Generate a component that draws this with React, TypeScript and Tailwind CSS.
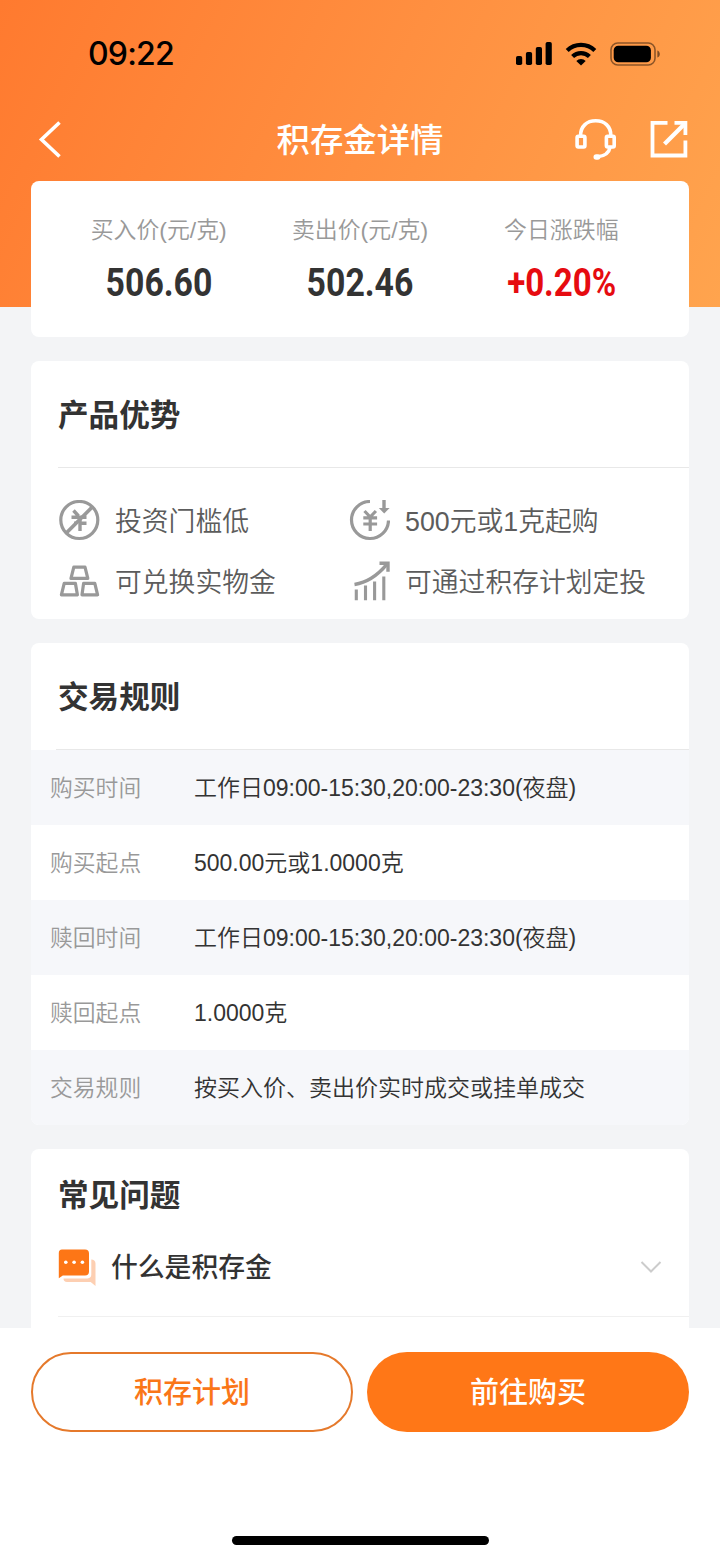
import React from 'react';

interface Price {
    label: string;
    value: string;
    tone: string;
}

interface Rule {
    label: string;
    value: string;
}

const prices: Price[] = [
    { label: '买入价(元/克)', value: '506.60', tone: 'text-[#333333] scale-x-[0.89]' },
    { label: '卖出价(元/克)', value: '502.46', tone: 'text-[#333333] scale-x-[0.89]' },
    { label: '今日涨跌幅', value: '+0.20%', tone: 'text-[#e60b10] scale-x-[0.87]' },
];

const rules: Rule[] = [
    { label: '购买时间', value: '工作日09:00-15:30,20:00-23:30(夜盘)' },
    { label: '购买起点', value: '500.00元或1.0000克' },
    { label: '赎回时间', value: '工作日09:00-15:30,20:00-23:30(夜盘)' },
    { label: '赎回起点', value: '1.0000克' },
    { label: '交易规则', value: '按买入价、卖出价实时成交或挂单成交' },
];

const SignalIcon = () => (
    <svg width="36" height="23" viewBox="0 0 36 23" fill="#000">
        <rect x="0" y="14" width="6.2" height="9" rx="1.8" />
        <rect x="9.9" y="10" width="6.2" height="13" rx="1.8" />
        <rect x="19.8" y="5" width="6.2" height="18" rx="1.8" />
        <rect x="29.6" y="0" width="6.2" height="23" rx="1.8" />
    </svg>
);

const WifiIcon = () => (
    <svg width="32" height="24" viewBox="0 0 32 24" fill="none" stroke="#000" strokeWidth="4.2">
        <path d="M2.2 8.6a19.6 19.6 0 0 1 27.6 0" />
        <path d="M7.6 14.6a12 12 0 0 1 16.8 0" />
        <path d="M16 23.6l-4.7-4.7a6.6 6.6 0 0 1 9.4 0z" fill="#000" stroke="none" />
    </svg>
);

const BatteryIcon = () => (
    <svg width="51" height="24" viewBox="0 0 51 24">
        <rect x="1" y="1" width="44" height="22" rx="6.8" fill="none" stroke="#000" strokeOpacity=".45" strokeWidth="1.6" />
        <rect x="3.7" y="3.7" width="37.2" height="16.6" rx="4.6" fill="#000" />
        <path d="M47.4 8.4c3.2 1.2 3.2 6 0 7.2z" fill="#000" fillOpacity=".5" />
    </svg>
);

const HeadsetIcon = () => (
    <svg width="42" height="42" viewBox="0 0 42 42" fill="none" stroke="#fff" strokeWidth="3.6" strokeLinecap="round">
        <path d="M5.6 17.5C5.6 8 12 2.8 20.7 2.8S35.8 8 35.8 17.5" />
        <rect x="2.1" y="18.2" width="7.8" height="10.8" rx="1.2" />
        <rect x="31.4" y="18.2" width="7.8" height="10.8" rx="1.2" />
        <path d="M35 29.500c-1 5.500-5 8.500-12.500 9.300" />
        <path d="M21.200 39h1.500" strokeWidth="5.400" />
    </svg>
);

const ShareIcon = () => (
    <svg width="38" height="38" viewBox="0 0 38 38" fill="none" stroke="#fff" strokeWidth="3.8">
        <path d="M17.5 2.9H2.5v32.600H35.400V20.500" />
        <path d="M14.5 24L34 4.500" strokeWidth="4.200" />
        <path d="M24.500 2.900h10.900v12" />
    </svg>
);

const NoThresholdIcon = () => (
    <svg width="42" height="42" viewBox="0 0 42 42" fill="none" stroke="#999999" strokeWidth="3.2">
        <circle cx="21.300" cy="20" r="18.500" />
        <path d="M8.300 33L34.300 7" strokeWidth="3.600" />
        <path d="M15.500 10.500l5 5.500M13.500 17.200h10M28.500 17.200h-5M16 23.200h2M22 23.200h6.500M22 18v13" strokeWidth="3.400" />
    </svg>
);

const YenInIcon = () => (
    <svg width="42" height="42" viewBox="0 0 42 42" fill="none" stroke="#999999" strokeWidth="3.2">
        <path d="M22 1.500A18.500 18.500 0 1 0 40.500 20.500" />
        <path d="M16.500 11l5.700 6 5.700-6M15.300 17.800h13.800M15.300 24h13.800M22.200 17v14" />
        <path d="M36 0v9" strokeWidth="3.400" />
        <path d="M30.800 8h10.800L36.200 13.400z" fill="#999999" stroke="none" />
    </svg>
);

const GoldIcon = () => (
    <svg width="42" height="42" viewBox="0 0 42 42" fill="none" stroke="#999999" strokeWidth="3.2" strokeLinejoin="round">
        <path d="M15.800 6.200h11.200l2.800 11.200H13z" />
        <path d="M6.200 22.400h11.200l2 11.400H3.400z" />
        <path d="M25.600 22.400h11.200l2.800 11.400H24z" />
    </svg>
);

const GrowthIcon = () => (
    <svg width="42" height="42" viewBox="0 0 42 42" fill="none" stroke="#999999" strokeWidth="3.1">
        <path d="M8.300 28.500v10.700M17.500 24.500v14.700M26.600 20.500v18.700M35.800 15.500v23.700" />
        <path d="M6.500 23.500C20 21.500 30 14 39 3.200" strokeWidth="3.400" />
        <path d="M31.500 2.200h8.500v8.500" strokeWidth="3.400" />
    </svg>
);

const ChatIcon = () => (
    <svg width="38" height="37" viewBox="0 0 38 37">
        <path d="M33.300 10.500a4 4 0 0 1 4.200 4V37l-4.800-4H9a3.500 3.500 0 0 1-3.500-3.600H29.500a3.800 3.800 0 0 0 3.800-3.800z" fill="#fdcfb2" />
        <path d="M4 .5h23a4 4 0 0 1 4 4v18a4 4 0 0 1-4 4H4.800L.8 29.200V4A3.500 3.500 0 0 1 4 .5z" fill="#fd7616" />
        <g fill="#fff">
            <circle cx="7.800" cy="13.300" r="1.800" />
            <circle cx="16.100" cy="13.300" r="1.800" />
            <circle cx="24.400" cy="13.300" r="1.800" />
        </g>
    </svg>
);

const advantages = [
    { icon: <NoThresholdIcon />, text: '投资门槛低' },
    { icon: <YenInIcon />, text: '500元或1克起购' },
    { icon: <GoldIcon />, text: '可兑换实物金' },
    { icon: <GrowthIcon />, text: '可通过积存计划定投' },
];

export default function App() {
    return (
        <div className="w-[720px] h-[1560px] flex flex-col overflow-hidden bg-white whitespace-nowrap font-['Liberation_Sans','Noto_Sans_CJK_SC',sans-serif] text-[#333333]">
            <div className="h-[1328px] shrink-0 overflow-hidden bg-[#f3f4f6]">
                {/* Header */}
                <header className="h-[307px] bg-linear-[115deg] from-[#ff7a2f] via-[#ff8f40] to-[#ffa44e]">
                    <div className="h-[107px] pl-[88px] pr-[59px] flex items-center justify-between">
                        <span className="font-['Inter',sans-serif] font-medium text-[32px] leading-none tracking-[-0.8px] text-black">09:22</span>
                        <div className="flex items-center gap-[13px]">
                            <SignalIcon />
                            <WifiIcon />
                            <BatteryIcon />
                        </div>
                    </div>
                    <div className="h-[74px] pb-[10px] grid grid-cols-[1fr_auto_1fr] items-center text-white">
                        <svg className="ml-[38px]" width="24" height="38" viewBox="0 0 24 38" fill="none" stroke="#fff" strokeWidth="3.6">
                            <path d="M21.5 2.500L3.500 19.500l18 17" />
                        </svg>
                        <h1 className="pt-[4px] text-[33.4px] font-medium leading-none">积存金详情</h1>
                        <div className="flex items-center justify-end gap-[33px] pr-[32px]">
                            <HeadsetIcon />
                            <ShareIcon />
                        </div>
                    </div>
                    <div className="mx-[31px] h-[156px] px-[27px] pt-[35px] grid grid-cols-3 bg-white rounded-lg">
                        {prices.map((p) => (
                            <div key={p.label} className="flex flex-col items-center">
                                <div className="h-7 leading-7 text-[22.9px] font-[350] text-[#999999]">{p.label}</div>
                                <div className={`mt-[19px] h-10 leading-10 font-['Roboto',sans-serif] font-bold text-[38px] ${p.tone}`}>{p.value}</div>
                            </div>
                        ))}
                    </div>
                </header>

                <section className="mx-[31px] mt-[54px] h-[258px] bg-white rounded-lg">
                    <h2 className="ml-[27px] h-[107px] leading-[108px] border-b border-[#e8e8e8] text-[30.6px] font-bold">产品优势</h2>
                    <div className="pl-[27px] pt-[22px] grid grid-cols-[290px_1fr]">
                        {advantages.map((a) => (
                            <div key={a.text} className="h-[61px] flex items-center gap-[15px]">
                                {a.icon}
                                <span className="pt-[3px] text-[26.8px] font-[350] leading-none text-[#5c5c5c]">{a.text}</span>
                            </div>
                        ))}
                    </div>
                </section>

                <section className="mx-[31px] mt-6 h-[482px] bg-white rounded-lg overflow-hidden">
                    <h2 className="ml-[25px] pl-[2px] h-[107px] leading-[108px] border-b border-[#e8e8e8] text-[30.6px] font-bold">交易规则</h2>
                    {rules.map((r) => (
                        <div key={r.label} className="h-[75px] pl-[19px] pt-[2px] flex items-center text-[23px] leading-none odd:bg-white even:bg-[#f6f7fa]">
                            <span className="w-[144px] font-[350] text-[22.8px] text-[#999999]">{r.label}</span>
                            <span className="font-[350]">{r.value}</span>
                        </div>
                    ))}
                </section>

                <section className="mx-[31px] mt-6 h-[300px] bg-white rounded-lg">
                    <h2 className="ml-[27px] h-[69px] pt-[23px] leading-[46px] text-[30.6px] font-bold">常见问题</h2>
                    <div className="ml-[27px] h-[99px] pr-[27px] flex items-center border-b border-[#f0f0f0]">
                        <ChatIcon />
                        <span className="ml-[15px] pt-[2px] text-[26.8px] font-medium leading-none">什么是积存金</span>
                        <svg className="ml-auto" width="22" height="14" viewBox="0 0 22 14" fill="none" stroke="#cccccc" strokeWidth="2">
                            <path d="M1.5 2L11 11.500L20.500 2" />
                        </svg>
                    </div>
                </section>
            </div>

            {/* Bottom actions */}
            <footer className="flex-1 flex flex-col items-center justify-between pt-6 pb-[15px]">
                <div className="flex gap-[14px] text-[29px] font-medium">
                    <button className="w-[322px] h-20 pt-[3px] rounded-full border-2 border-[#e5792b] text-[#fa7618]">积存计划</button>
                    <button className="w-[322px] h-20 pt-[3px] rounded-full bg-[#ff7717] text-white">前往购买</button>
                </div>
                <div className="w-[257px] h-[9px] rounded-full bg-black" />
            </footer>
        </div>
    );
}
